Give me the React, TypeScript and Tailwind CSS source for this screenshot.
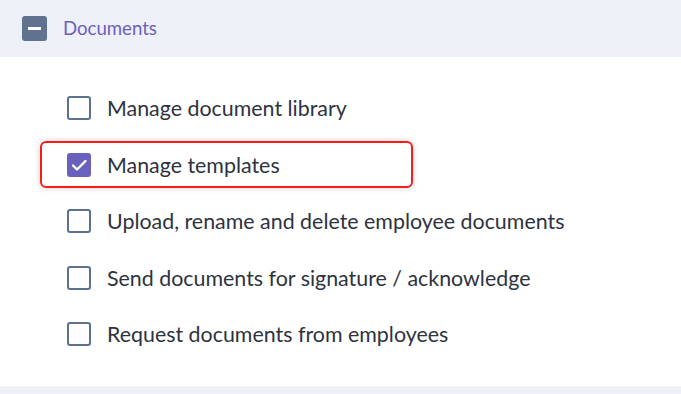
import { useState } from 'react';

const items = [
  { label: 'Manage document library', checked: false },
  { label: 'Manage templates', checked: true, highlight: true },
  { label: 'Upload, rename and delete employee documents', checked: false },
  { label: 'Send documents for signature / acknowledge', checked: false },
  { label: 'Request documents from employees', checked: false },
];

function Checkbox({ checked, onClick }: { checked: boolean; onClick: () => void }) {
  if (checked) {
    return (
      <button
        onClick={onClick}
        className="flex h-6 w-6 shrink-0 items-center justify-center rounded-[3px] bg-[#6a60bd]"
      >
        <svg width="20" height="20" viewBox="0 0 20 20" fill="none">
          <path d="M4 10.5l4 4L16.5 6" stroke="white" strokeWidth="2.4" strokeLinecap="round" strokeLinejoin="round" />
        </svg>
      </button>
    );
  }
  return (
    <button
      onClick={onClick}
      className="h-6 w-6 shrink-0 rounded-[3px] border-[2.5px] border-[#5d7090] bg-white"
    />
  );
}

export default function App() {
  const [state, setState] = useState(items.map((i) => i.checked));

  return (
    <div className="flex h-[394px] w-[681px] flex-col bg-white font-['Lato',sans-serif]">
      {/* Section header */}
      <div className="flex h-[57px] shrink-0 items-center gap-4 bg-[#eef0f8] pl-[22px]">
        <div className="flex h-[25px] w-[25px] items-center justify-center rounded-[3px] bg-[#5f7290]">
          <div className="h-[3px] w-[13px] bg-white" />
        </div>
        <span className="text-[18.6px] text-[#6a60bd]">Documents</span>
      </div>

      {/* Permission list */}
      <div className="flex flex-col pt-[23px] pb-[23px]">
        {items.map((item, i) => (
          <div key={item.label} className="relative flex h-[56.5px] items-center gap-4 pl-[67px]">
            {item.highlight && (
              <div className="pointer-events-none absolute left-[40px] top-[4px] h-[47px] w-[373px] rounded-[6px] border-2 border-[#ff1a1a] shadow-[0_0_6px_rgba(0,0,0,0.18)]" />
            )}
            <Checkbox
              checked={state[i]}
              onClick={() => setState(state.map((v, j) => (j === i ? !v : v)))}
            />
            <span className="text-[21.4px] text-[#2e3340]">{item.label}</span>
          </div>
        ))}
      </div>

      <div className="flex-1 bg-[#eef0f8]" />
    </div>
  );
}
